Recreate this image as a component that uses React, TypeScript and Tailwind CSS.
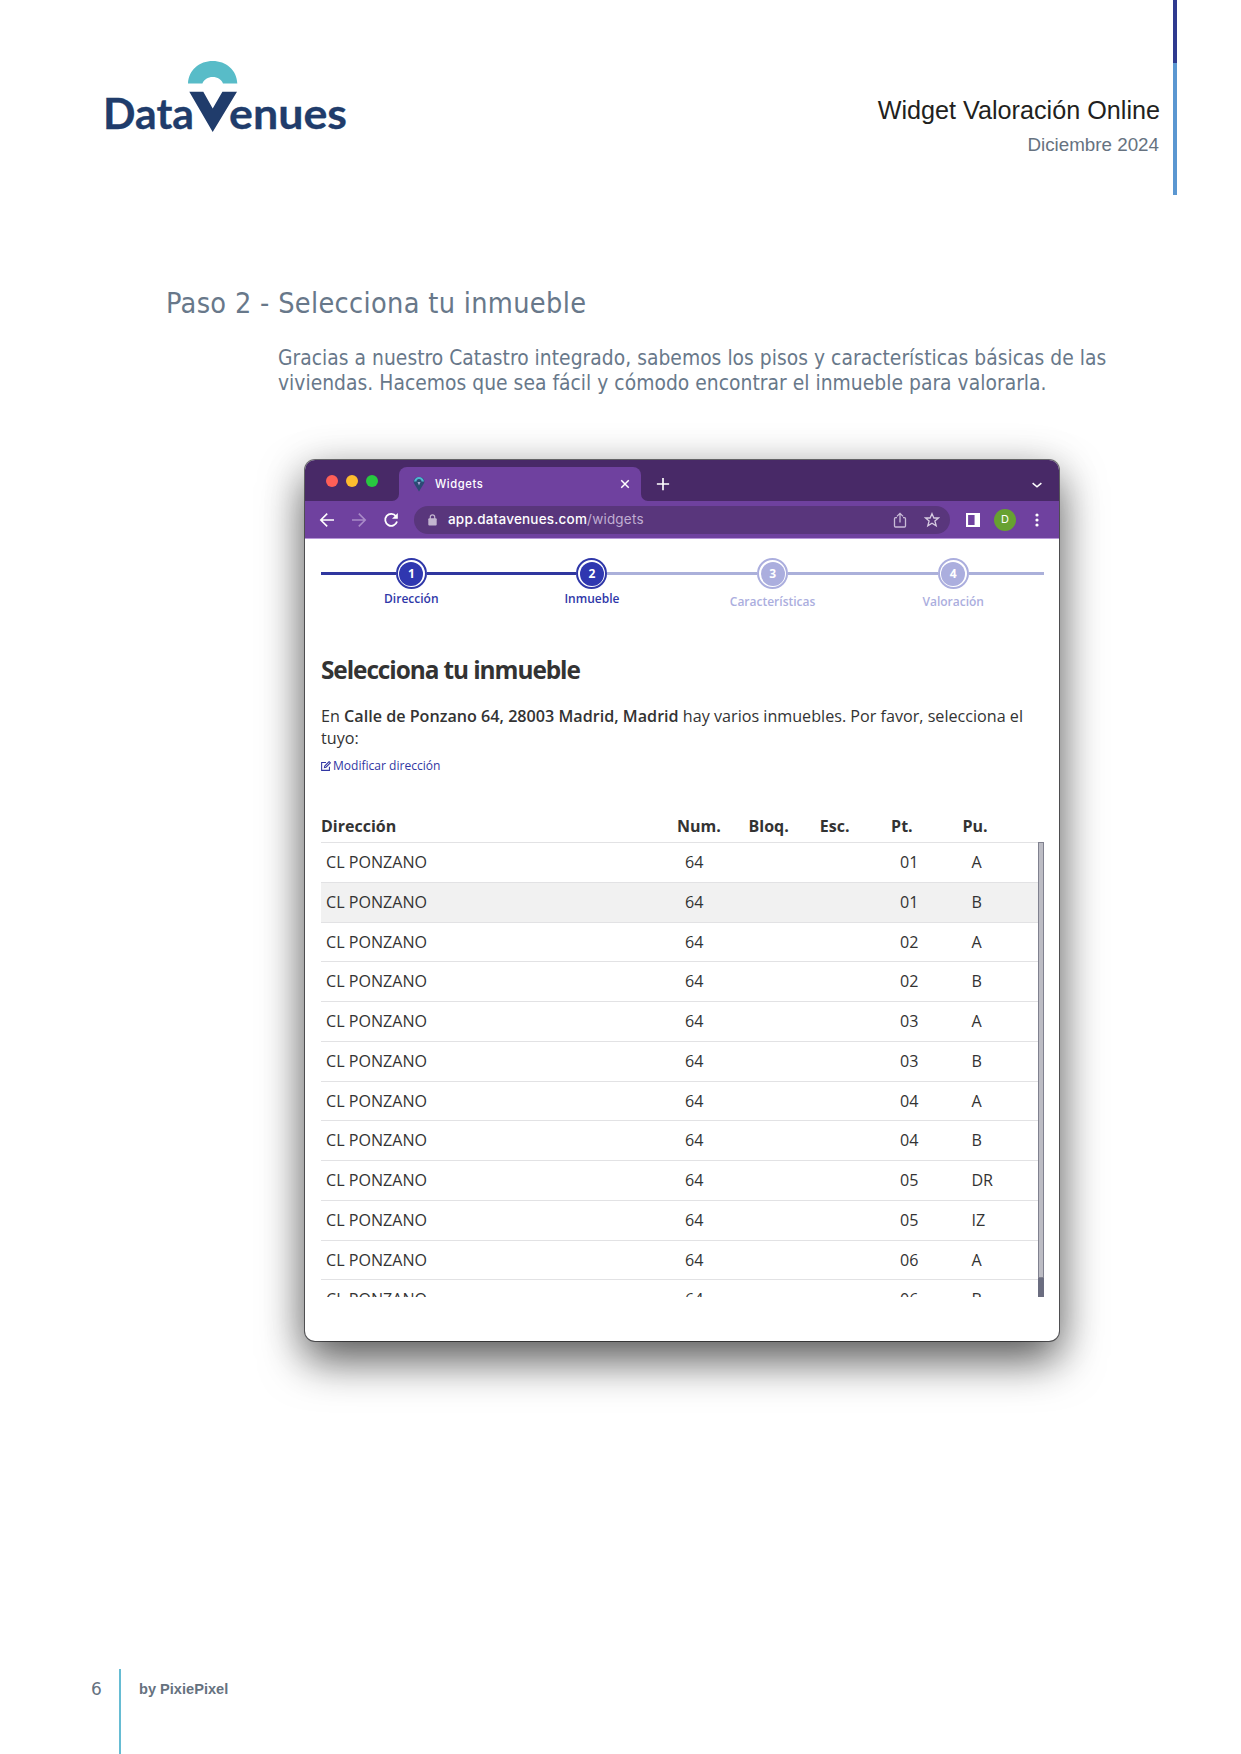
import type { ReactNode } from "react";

const rows = [
  ["01", "A"], ["01", "B"], ["02", "A"], ["02", "B"], ["03", "A"], ["03", "B"],
  ["04", "A"], ["04", "B"], ["05", "DR"], ["05", "IZ"], ["06", "A"], ["06", "B"],
];

const steps = [
  { n: 1, label: "Dirección", active: true },
  { n: 2, label: "Inmueble", active: true },
  { n: 3, label: "Características", active: false },
  { n: 4, label: "Valoración", active: false },
];

function Logo() {
  return (
    <svg width="250" height="80" viewBox="100 56 250 80" className="block">
      <path d="M188 83.5C188.5 70 199.500 61 212.700 61S237 70 237.300 83.500H223C221.500 79.500 217.500 77 212.700 77S204 79.500 202.400 83.500Z" fill="#58bcc8" />
      <path d="M189.300 91.800H203.300L212.700 108.500L222.400 91.800H237L212.700 132Z" fill="#203c6b" />
      <g fill="#203c6b" stroke="#203c6b" strokeWidth="0.3" fontFamily="Lato, sans-serif" fontWeight="700" fontSize="42">
        <text x="103" y="128.500" textLength="91" lengthAdjust="spacingAndGlyphs">Data</text>
        <text x="229" y="128.500" textLength="118" lengthAdjust="spacingAndGlyphs">enues</text>
      </g>
    </svg>
  );
}

function Icon({ children, size = 16, className = "" }: { children: ReactNode; size?: number; className?: string }) {
  return (
    <svg width={size} height={size} viewBox="0 0 16 16" fill="none" stroke="currentColor" strokeWidth="1.600" className={"shrink-0 " + className}>
      {children}
    </svg>
  );
}

function TabStrip() {
  return (
    <div className="flex h-[41px] bg-[#482967] text-white">
      <div className="flex w-[94px] gap-[8px] pt-[15px] pl-[21px]">
        <span className="h-3 w-3 rounded-full bg-[#ff5f57]" />
        <span className="h-3 w-3 rounded-full bg-[#febc2e]" />
        <span className="h-3 w-3 rounded-full bg-[#28c840]" />
      </div>
      <div className="relative mt-[7px] flex w-[242px] items-center rounded-t-[8px] bg-[#6f419f] pr-[11px] pl-[14px]">
        <svg className="absolute bottom-0 -left-[7px]" width="7" height="7"><path d="M7 0V7H0A7 7 0 0 0 7 0Z" fill="#6f419f" /></svg>
        <svg className="absolute -right-[7px] bottom-0" width="7" height="7"><path d="M0 0V7H7A7 7 0 0 1 0 0Z" fill="#6f419f" /></svg>
        <svg width="12" height="16" viewBox="0 0 12 16" className="shrink-0">
          <path d="M0.800 7C0 3 2.500 1 6 1S12 3 11.200 7L6 15.500Z" fill="#2c4a74" />
          <path d="M1 5.500C1.500 2.500 3.500 1 6 1S10.500 2.500 11 5.500H8.500A2.500 2.500 0 0 0 3.500 5.500Z" fill="#4fb4cf" />
          <path d="M4.500 6H7.500L6 9.500Z" fill="#a9a3d6" />
        </svg>
        <span className="ml-[10px] font-['Inter'] text-[11.200px] leading-4 font-medium tracking-[0.600px]">Widgets</span>
        <Icon size={10} className="ml-auto"><path d="M2 2L14 14M14 2L2 14" strokeWidth="2.400" /></Icon>
      </div>
      <Icon size={14} className="mt-[17px] ml-[15px]"><path d="M8 1V15M1 8H15" strokeWidth="1.900" /></Icon>
      <Icon size={10} className="mt-[19.500px] mr-[17px] ml-auto"><path d="M1 5L8 11L15 5" strokeWidth="2.400" /></Icon>
    </div>
  );
}

function Toolbar() {
  return (
    <div className="flex h-[38px] items-center border-b border-[#b795d8] bg-[#6f419f] text-white">
      <Icon className="ml-[14px]"><path d="M15 8H2M8.200 1.600L1.800 8L8.200 14.400" /></Icon>
      <Icon className="ml-[16px] text-[#a98bc8]"><path d="M1 8H14M7.800 1.600L14.200 8L7.800 14.400" /></Icon>
      <Icon className="ml-[16px]"><path d="M13 4.200A6 6 0 1 0 14 9.500" strokeWidth="1.800" /><path d="M14.800 1V6.800H9Z" fill="currentColor" stroke="none" /></Icon>
      <div className="ml-[15px] flex h-[28px] w-[536px] items-center rounded-full bg-[#59367c] pr-[10px] pl-[14px]">
        <svg width="9" height="12" viewBox="0 0 9 12" className="shrink-0 text-[#c2b5cf]">
          <rect x="0.300" y="4.300" width="8.400" height="7.200" rx="1" fill="currentColor" />
          <path d="M2.300 5V3A2.200 2.200 0 0 1 6.700 3V5" fill="none" stroke="currentColor" strokeWidth="1.200" />
        </svg>
        <span className="mb-[1px] ml-[11px] font-['Inter'] text-[13.500px] leading-4 font-normal tracking-[0.200px] text-[#c0aed2]"><span className="font-medium text-white">app.datavenues.com</span><span>/widgets</span></span>
        <Icon className="ml-auto text-[#c9bbd7]"><path d="M5 5.700H3.500Q2.500 5.700 2.500 6.700V14Q2.500 15 3.500 15H12.500Q13.500 15 13.500 14V6.700Q13.500 5.700 12.500 5.700H11M8 10.500V1.500M4.900 4.400L8 1.300L11.100 4.400" strokeWidth="1.300" /></Icon>
        <Icon className="ml-[16px] text-[#d6cbe1]"><path d="M8 1.700L9.900 6H14.500L10.900 9L12.200 13.800L8 11.200L3.800 13.800L5.100 9L1.500 6H6.100Z" strokeWidth="1.300" /></Icon>
      </div>
      <Icon size={14} className="ml-[16px]"><path d="M0 0H16V16H0ZM2.400 2.400V13.600H9.800V2.400Z" fill="currentColor" fillRule="evenodd" stroke="none" /></Icon>
      <span className="ml-[14px] flex h-[22px] w-[22px] items-center justify-center rounded-full bg-[#67a131] font-['Inter'] text-[11px] leading-none">D</span>
      <Icon className="ml-[13px]"><g fill="currentColor" stroke="none"><circle cx="8" cy="3" r="1.600" /><circle cx="8" cy="8" r="1.600" /><circle cx="8" cy="13" r="1.600" /></g></Icon>
    </div>
  );
}

function Stepper() {
  return (
    <div className="grid grid-cols-4">
      {steps.map((s) => (
        <div key={s.n} className={"flex flex-col items-center " + (s.active ? "text-[#2f37a8]" : "text-[#abaede]")}>
          <div className="flex w-full items-center">
            <div className={"h-[3px] flex-1 " + (s.active ? "bg-[#30379f]" : "bg-[#abb0da]")} />
            <div className="flex h-[31px] w-[31px] items-center justify-center rounded-full border-2 border-current">
              <div className={"flex h-[24px] w-[24px] items-center justify-center rounded-full text-[12px] leading-none font-bold " + (s.active ? "bg-[#2f37b0]" : "bg-[#abaede]")}>
                <span className="text-white">{s.n}</span>
              </div>
            </div>
            <div className={"h-[3px] flex-1 " + (s.n === 1 ? "bg-[#30379f]" : "bg-[#abb0da]")} />
          </div>
          <span className={"text-[12px] leading-4 font-semibold " + (s.active ? "mt-[2px]" : "mt-[5px]")}>{s.label}</span>
        </div>
      ))}
    </div>
  );
}

const cols = "grid grid-cols-[356px_71.500px_71.300px_71.300px_71.300px_1fr]";

function PropertyTable() {
  return (
    <div className="mt-[36px]">
      <div className={cols + " h-[32px] text-[16px] leading-[32px] font-bold"}>
        <span>Dirección</span><span>Num.</span><span>Bloq.</span><span>Esc.</span><span>Pt.</span><span>Pu.</span>
      </div>
      <div className="flex h-[455px] overflow-hidden">
        <div className="flex-1">
          {rows.map(([pt, pu], i) => (
            <div key={i} className={cols + " h-[39.750px] border-t-[1.500px] border-[#e2e2e4] text-[16.100px] leading-[38.500px] " + (i === 1 ? "bg-[#f1f1f1]" : "")}>
              <span className="pl-[5px]">CL PONZANO</span>
              <span className="pl-[8px]">64</span><span /><span />
              <span className="pl-[9px]">{pt}</span>
              <span className="pl-[9px]">{pu}</span>
            </div>
          ))}
        </div>
        <div className="flex h-full w-[6px] flex-col">
          <div className="flex-1 border border-[#80818f] bg-[#bcbcc4]" />
          <div className="h-[19px] bg-[#6b6d80]" />
        </div>
      </div>
    </div>
  );
}

export default function App() {
  return (
    <div className="flex h-[1754px] w-[1241px] flex-col overflow-hidden bg-white">
      <header className="flex h-[195px] justify-between pr-[64px] pl-[100px]">
        <div className="pt-[56px]"><Logo /></div>
        <div className="flex">
          <div className="flex flex-col items-end pt-[94px] pr-[13px] font-['Liberation_Sans'] text-[#221f20]">
            <span className="text-[25.200px] leading-8">Widget Valoración Online</span>
            <span className="mt-[7px] pr-px text-[18.800px] leading-6 text-[#66727f]">Diciembre 2024</span>
          </div>
          <div className="w-[4px] bg-[#5b97d1]"><div className="h-[63px] bg-[#2f3a8f]" /></div>
        </div>
      </header>

      <main className="flex flex-col font-['DejaVu_Sans_Condensed','DejaVu_Sans'] text-[#68788a] [font-stretch:condensed]">
        <h1 className="mt-[88px] ml-[166px] text-[28.600px] leading-10 tracking-[0.320px]">Paso 2 - Selecciona tu inmueble</h1>
        <p className="mt-[23px] ml-[278px] text-[20.800px] leading-[25px] tracking-[0.035px] whitespace-nowrap">
          Gracias a nuestro Catastro integrado, sabemos los pisos y características básicas de las<br />
          viviendas. Hacemos que sea fácil y cómodo encontrar el inmueble para valorarla.
        </p>
        <section className="mt-[64px] ml-[305px] h-[881px] w-[754px] overflow-hidden rounded-[10px] bg-white font-['Open_Sans'] text-[#333] shadow-[0_20px_44px_rgba(0,0,0,0.6),0_4px_44px_rgba(0,0,0,0.15),0_0_0_1px_rgba(60,60,65,0.7)] [font-stretch:normal]">
          <TabStrip />
          <Toolbar />
          <div className="pt-[19px] pr-[15.500px] pl-[16px]">
            <Stepper />
            <h2 className="mt-[42px] text-[24.400px] leading-9 font-bold tracking-[-1.080px]">Selecciona tu inmueble</h2>
            <p className="mt-[18px] text-[16.150px] leading-[21.500px] whitespace-nowrap">
              En <b className="font-semibold">Calle de Ponzano 64, 28003 Madrid, Madrid</b> hay varios inmuebles. Por favor, selecciona el<br />tuyo:
            </p>
            <a className="mt-[9px] flex items-center gap-[2px] text-[12.050px] leading-4 text-[#3237a3]">
              <Icon size={10}><path d="M8 2.500H1V15H13.500V9M5.500 10.500L6 8L13 1L15 3L8 10Z" strokeWidth="1.700" /></Icon>
              Modificar dirección
            </a>
            <PropertyTable />
          </div>
        </section>
      </main>

      <footer className="mt-auto flex h-[85px] font-['Liberation_Sans'] text-[#66727f]">
        <span className="w-[119px] pt-[8px] pl-[91px] font-['DejaVu_Sans'] text-[17px] leading-6">6</span>
        <div className="w-[2px] bg-[#66bcd3]" />
        <span className="pt-[8px] pl-[18px] text-[14.600px] leading-6 font-bold">by PixiePixel</span>
      </footer>
    </div>
  );
}
